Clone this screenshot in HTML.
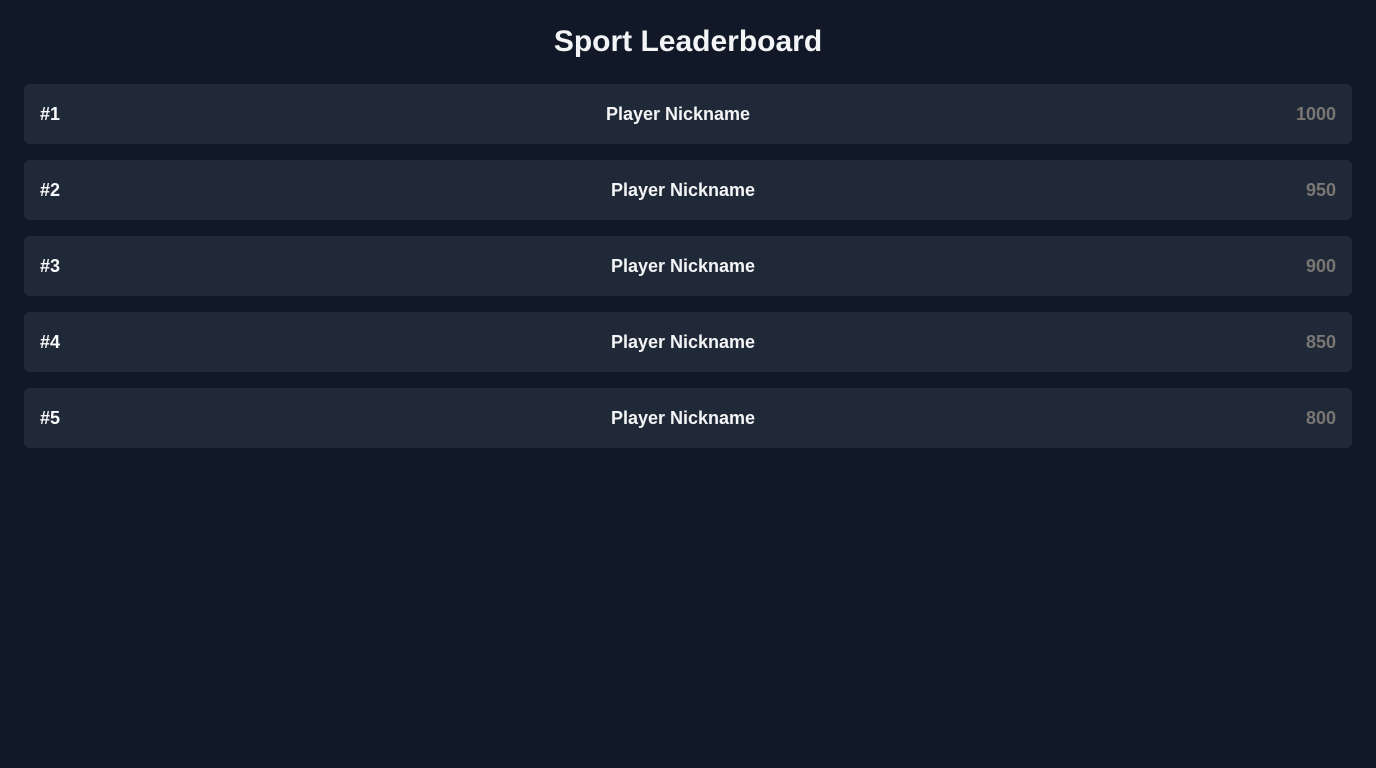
<!DOCTYPE html>
<html><head><meta charset="utf-8"><style>
html,body{margin:0;padding:0;background:#111827;width:1376px;height:768px;overflow:hidden;font-family:"Liberation Sans",sans-serif;}
h1{margin:0;padding-top:22px;height:84px;box-sizing:border-box;text-align:center;color:#f3f4f6;font-size:30px;font-weight:bold;line-height:40px;}
.list{padding:0 24px;}
.row{display:flex;justify-content:space-between;align-items:center;height:60px;background:#1f2937;border-radius:6px;padding:0 16px;margin-bottom:16px;box-sizing:border-box;font-weight:bold;font-size:18px;}
.r{color:#f9fafb}.n{color:#f3f4f6}.s{color:#7a7673}
</style></head><body>
<h1>Sport Leaderboard</h1>
<div class="list">
<div class="row"><span class="r">#1</span><span class="n">Player Nickname</span><span class="s">1000</span></div>
<div class="row"><span class="r">#2</span><span class="n">Player Nickname</span><span class="s">950</span></div>
<div class="row"><span class="r">#3</span><span class="n">Player Nickname</span><span class="s">900</span></div>
<div class="row"><span class="r">#4</span><span class="n">Player Nickname</span><span class="s">850</span></div>
<div class="row"><span class="r">#5</span><span class="n">Player Nickname</span><span class="s">800</span></div>
</div>
</body></html>
